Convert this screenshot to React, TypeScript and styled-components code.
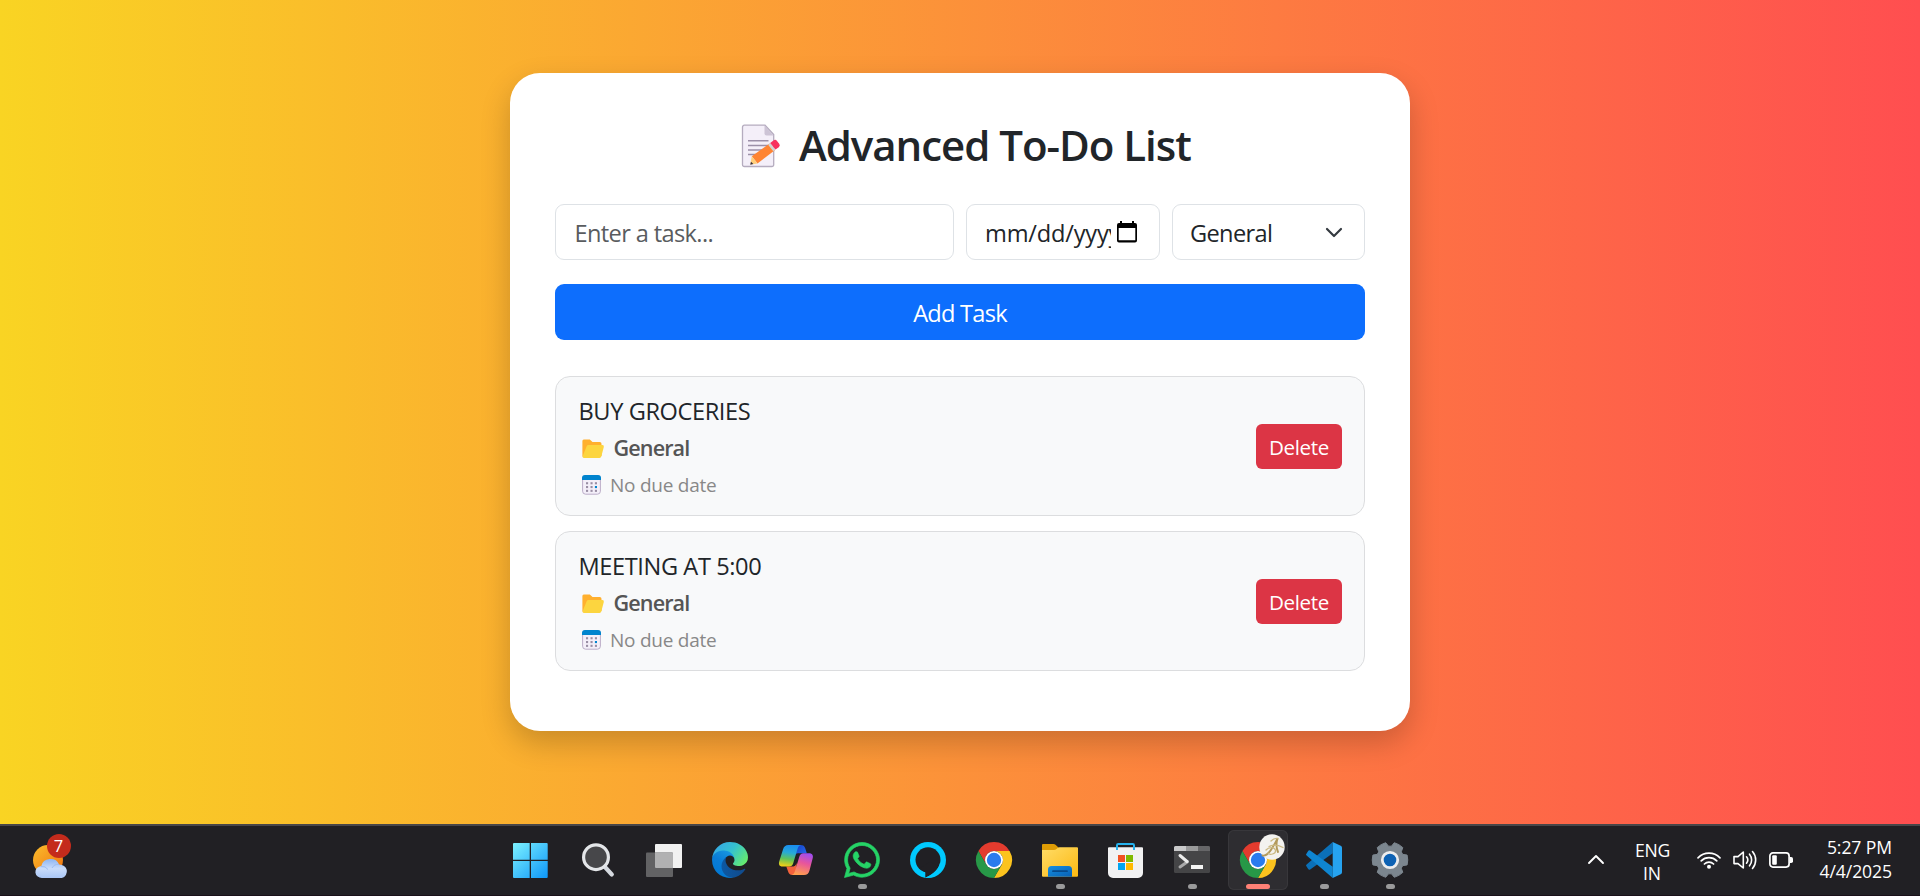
import React from 'react';
import styled, { createGlobalStyle } from 'styled-components';
import { FaWhatsapp } from 'react-icons/fa';

const GlobalStyle = createGlobalStyle`
  *, *::before, *::after { box-sizing: border-box; }
  html, body { margin: 0; padding: 0; }
  body {
    font-family: 'Open Sans', 'Noto Sans', sans-serif;
    color: #212529;
    overflow: hidden;
  }
  svg { display: block; overflow: visible; flex: none; }
`;

const Desktop = styled.div`
  display: flex;
  flex-direction: column;
  width: 1920px;
  height: 896px;
`;

const Page = styled.main`
  flex: 1;
  display: flex;
  justify-content: center;
  align-items: flex-start;
  padding-top: 73px;
  background: linear-gradient(to right, #f9d423, #ff4e50);
`;

const Card = styled.section`
  width: 900px;
  height: 658px;
  padding: 45px 45px 0;
  border-radius: 30px;
  background: #fff;
  box-shadow: 0 12px 30px rgba(0, 0, 0, 0.2);
`;

const Title = styled.h1`
  display: flex;
  align-items: center;
  gap: 14px;
  height: 54px;
  margin: 0 0 32px;
  padding-left: 184px;
  font-size: 42px;
  font-weight: 540;
  line-height: 54px;
  letter-spacing: -1.03px;
  white-space: nowrap;
`;

const Fields = styled.div`
  display: grid;
  grid-template-columns: 399px 194px 193px;
  gap: 12px;
  margin-bottom: 24px;
`;

const TaskInput = styled.input`
  height: 56px;
  padding: 2px 18px 0 18.5px;
  border: 1px solid #dee2e6;
  border-radius: 9px;
  background: #fff;
  font: 400 23.6px 'Open Sans', sans-serif;
  letter-spacing: -0.63px;
  outline: none;
  &::placeholder {
    color: #595c5f;
    opacity: 1;
  }
`;

const Control = styled.div`
  display: flex;
  align-items: center;
  justify-content: space-between;
  height: 56px;
  padding: 0 22px 0 17px;
  border: 1px solid #dee2e6;
  border-radius: 9px;
  font-size: 23.6px;
  line-height: 36px;
`;

const ControlText = styled.span<{ $width?: number; $spacing: number }>`
  width: ${(p) => (p.$width ? `${p.$width}px` : 'auto')};
  padding: 2px 0 0 ${(p) => (p.$width ? 1 : 0)}px;
  overflow: hidden;
  white-space: nowrap;
  letter-spacing: ${(p) => p.$spacing}px;
`;

const AddButton = styled.button`
  display: block;
  width: 100%;
  height: 56px;
  margin: 0 0 36px;
  padding: 2px 0 0;
  border: 0;
  border-radius: 9px;
  background: #0d6efd;
  color: #fff;
  font: 400 23.6px 'Open Sans', sans-serif;
  letter-spacing: -0.75px;
`;

const TaskList = styled.ul`
  display: flex;
  flex-direction: column;
  gap: 15px;
  margin: 0;
  padding: 0;
  list-style: none;
`;

const TaskItem = styled.li`
  display: flex;
  align-items: center;
  justify-content: space-between;
  height: 140px;
  padding: 0 22px;
  border: 1px solid #dcdddf;
  border-radius: 15px;
  background: #f8f9fa;
`;

const TaskInfo = styled.div`
  display: flex;
  flex-direction: column;
  margin-top: 4px;
`;

const TaskName = styled.span`
  height: 40px;
  padding-left: 0.5px;
  font-size: 23.6px;
  line-height: 40px;
  letter-spacing: -0.4px;
`;

const TaskMeta = styled.span<{ $kind: 'category' | 'date' }>`
  display: flex;
  align-items: center;
  gap: ${(p) => (p.$kind === 'category' ? 9.5 : 9)}px;
  height: ${(p) => (p.$kind === 'category' ? 33 : 41)}px;
  padding-left: 4px;
  color: ${(p) => (p.$kind === 'category' ? '#555' : '#888')};
  font-size: ${(p) => (p.$kind === 'category' ? 21.6 : 19)}px;
  font-weight: ${(p) => (p.$kind === 'category' ? 580 : 400)};
  letter-spacing: ${(p) => (p.$kind === 'category' ? -0.9 : -0.25)}px;
`;

const DeleteButton = styled.button`
  width: 86px;
  height: 45px;
  padding: 1px 0 0;
  border: 0;
  border-radius: 6px;
  background: #dc3545;
  color: #fff;
  font: 400 20.6px 'Open Sans', sans-serif;
  letter-spacing: -0.36px;
`;

const Taskbar = styled.footer`
  display: flex;
  height: 72px;
  border-top: 2px solid #484649;
  border-bottom: 1px solid #1a1019;
  background: #212024;
  color: #fff;
`;

const Widgets = styled.div`
  width: 499px;
  padding: 15px 0 0 33px;
`;

const Weather = styled.div`
  position: relative;
  width: 34px;
`;

const Badge = styled.span`
  position: absolute;
  left: 13.5px;
  top: -7px;
  width: 24px;
  height: 24px;
  border-radius: 50%;
  background: #c42b1c;
  font-size: 16.5px;
  font-weight: 500;
  line-height: 24px;
  text-align: center;
`;

const Apps = styled.nav`
  display: flex;
`;

const AppSlot = styled.div<{ $active?: boolean }>`
  display: flex;
  flex-direction: column;
  align-items: center;
  width: ${(p) => (p.$active ? 60 : 66)}px;
  height: 60px;
  margin: ${(p) => (p.$active ? '4px 3px 0' : '4px 0 0')};
  padding-top: 12px;
  border-radius: 6px;
  background: ${(p) => (p.$active ? '#2e2d31' : 'transparent')};
  box-shadow: ${(p) => (p.$active ? 'inset 0 0 0 1px #38373b' : 'none')};
`;

const IconFrame = styled.div`
  position: relative;
  display: flex;
  justify-content: center;
  align-items: center;
  width: 36px;
  height: 36px;
`;

const Indicator = styled.span<{ $active?: boolean }>`
  width: ${(p) => (p.$active ? 24 : 9)}px;
  height: 5px;
  margin-top: 6px;
  border-radius: 2.5px;
  background: ${(p) => (p.$active ? '#ff8176' : '#9a9a9b')};
`;

const ProfileBadge = styled.div`
  position: absolute;
  left: 19px;
  top: -8px;
`;

const Tray = styled.div`
  flex: 1;
  display: flex;
  justify-content: flex-end;
  padding-right: 28px;
  font-size: 17.6px;
`;

const TrayLabel = styled.div<{ $align: 'center' | 'right'; $width: number; $top: number; $spacing: number; $line: number }>`
  width: ${(p) => p.$width}px;
  padding-top: ${(p) => p.$top}px;
  text-align: ${(p) => p.$align};
  letter-spacing: ${(p) => p.$spacing}px;
  line-height: ${(p) => p.$line}px;
  white-space: nowrap;
`;

const TrayIcons = styled.div`
  display: flex;
  align-items: center;
  gap: 12px;
  height: 20px;
  margin: 24px 26px 0 28px;
`;

const TrayChevron = styled.div`
  margin: 29px 31px 0 0;
`;

const MemoIcon = () => (
  <svg width="46" height="46" viewBox="0 0 46 46">
    <path d="M6 3.700h20.500L35.200 13v30.200a1.800 1.800 0 0 1-1.800 1.800H5.800A1.800 1.800 0 0 1 4 43.200V5.500a1.800 1.800 0 0 1 2-1.800z" transform="translate(-.5 -.5)" fill="#f4eff9" stroke="#b5acbf" strokeWidth="1.300" />
    <path d="M25.500 3.600v8a2 2 0 0 0 2 2h7.200z" fill="#cdc4d6" />
    <path d="M9 18.700h20.500M9 23.500h20.500M9 28h17M9 32.400h10" stroke="#9b8fa8" strokeWidth="1.500" />
    <path d="M30.600 21.600l5.200 6.600L18.500 41.500l-5.700-7.300z" fill="#ff8433" />
    <path d="M12.800 34.200l5.700 7.300-6.200.9-.9-.8z" fill="#ffcf7c" />
    <path d="M12 39.700l2.400 2.200-3.200.8z" fill="#37303f" />
    <path d="M29.100 22.700l2.200-1.700 5.200 6.600-2.200 1.700z" fill="#d3d3d3" />
    <path d="M31.200 21l3.300-2.500a2.500 2.500 0 0 1 3.500.5l2.200 2.800a2.500 2.500 0 0 1-.4 3.400l-3.300 2.400z" fill="#f8315f" />
  </svg>
);

const DateIcon = () => (
  <svg width="20" height="22" viewBox="0 0 20 22">
    <path fillRule="evenodd" d="M3 0h2v2h10V0h2v2h1a2 2 0 0 1 2 2v15.500a2 2 0 0 1-2 2H2a2 2 0 0 1-2-2V4a2 2 0 0 1 2-2h1zM1.700 7v12.300h16.600V7z" fill="#000" />
  </svg>
);

const SelectChevron = () => (
  <svg width="16" height="9" viewBox="0 0 16 9">
    <path d="M1 1l7 7 7-7" fill="none" stroke="#343a40" strokeWidth="2.200" strokeLinecap="round" strokeLinejoin="round" />
  </svg>
);

const FolderIcon = () => (
  <svg width="22" height="18" viewBox="0 0 22 18">
    <path d="M1.800.500h6l2.700 2.400h7.200a1.800 1.800 0 0 1 1.800 1.800V17l-17 1.500A1.800 1.800 0 0 1 .400 17V2A1.500 1.500 0 0 1 1.800.500z" fill="#ffb02e" />
    <path d="M6.500 6H20.200a1.600 1.600 0 0 1 1.600 2l-2.500 9.600a1.800 1.800 0 0 1-1.800 1.300H2a1.400 1.400 0 0 1-1.300-1.800L4.700 7.300A1.900 1.900 0 0 1 6.500 6z" fill="#fcd53f" />
  </svg>
);

const CalendarIcon = () => (
  <svg width="19" height="20" viewBox="0 0 19 20">
    <rect x=".6" y=".6" width="17.800" height="18.600" rx="3" fill="#f4eff9" stroke="#bbaec8" />
    <path d="M0 5V3a3 3 0 0 1 3-3h13a3 3 0 0 1 3 3v2z" fill="#0084ce" />
    {[7.2, 11, 14.8].map((y) =>
      [4, 8.5, 12.9].map((x) => (
        <rect key={`${x}-${y}`} x={x} y={y} width="2.100" height="2.100" fill={x > 12 && y === 11 ? '#0084ce' : '#998ea4'} />
      )),
    )}
  </svg>
);

const WeatherIcon = () => (
  <svg width="34" height="38" viewBox="0 0 34 38">
    <defs>
      <linearGradient id="sun" x1="0" y1="0" x2="1" y2="1">
        <stop offset="0" stopColor="#fbbd2c" />
        <stop offset="1" stopColor="#f0700f" />
      </linearGradient>
      <linearGradient id="cloud" x1="0" y1="0" x2="0" y2="1">
        <stop offset="0" stopColor="#8db5f2" />
        <stop offset=".5" stopColor="#c9dcfa" />
        <stop offset="1" stopColor="#a9c6f6" />
      </linearGradient>
    </defs>
    <circle cx="15" cy="19" r="15" fill="url(#sun)" />
    <path d="M9 37a6 6 0 0 1-1-12 8.600 8.600 0 0 1 16.400-1.600A7 7 0 0 1 27 37z" transform="matrix(1.08 0 0 1 -.3 0)" fill="url(#cloud)" />
    <path d="M8 25.500a7 7 0 0 1 7 3M19 27a7 7 0 0 1 7-3.600" fill="none" stroke="#9dbcf0" strokeWidth="1" />
  </svg>
);

const WindowsIcon = () => (
  <svg width="36" height="36" viewBox="0 0 36 36">
    <defs>
      <linearGradient id="win" gradientUnits="userSpaceOnUse" x1="-1" y1="1" x2="34" y2="36">
        <stop offset="0" stopColor="#7df2ff" />
        <stop offset="1" stopColor="#0d96f8" />
      </linearGradient>
    </defs>
    <path d="M0 1h15.700v16.700H-1V2a1 1 0 0 1 1-1zM17 1h15.700a1 1 0 0 1 1 1v15.700H17zM-1 19h16.700v17H0a1 1 0 0 1-1-1zM17 19h16.700v16a1 1 0 0 1-1 1H17z" fill="url(#win)" />
  </svg>
);

const SearchIcon = () => (
  <svg width="36" height="36" viewBox="0 0 36 36">
    <path d="M24.500 24.500l7.300 8" stroke="#d5d9df" strokeWidth="4.200" strokeLinecap="round" />
    <circle cx="16" cy="15.200" r="12.400" fill="#47474a" stroke="#e4e6e9" strokeWidth="3.200" />
  </svg>
);

const TaskViewIcon = () => (
  <svg width="36" height="36" viewBox="0 0 36 36">
    <rect x="9" y="2" width="27" height="24" rx="1" fill="#f1f1f1" />
    <rect x="0" y="10.500" width="27" height="24.500" rx="1" fill="#626264" />
    <path d="M9 10.500h17a1 1 0 0 1 1 1V26H10a1 1 0 0 1-1-1z" fill="#b1b1b2" />
  </svg>
);

const EdgeIcon = () => (
  <svg width="36" height="36" viewBox="0 0 256 256">
    <defs>
      <linearGradient id="edgeA" x1="0" y1="0" x2="1" y2="0">
        <stop offset="0" stopColor="#0c59a4" />
        <stop offset="1" stopColor="#114a8b" />
      </linearGradient>
      <linearGradient id="edgeB" x1=".8" y1="0" x2=".3" y2="1">
        <stop offset="0" stopColor="#1b9de2" />
        <stop offset=".5" stopColor="#0a7cd6" />
        <stop offset="1" stopColor="#0078d4" />
      </linearGradient>
      <linearGradient id="edgeC" x1="0" y1=".2" x2="1" y2=".7">
        <stop offset="0" stopColor="#35a6e8" />
        <stop offset=".5" stopColor="#35c1cf" />
        <stop offset="1" stopColor="#66eb6e" />
      </linearGradient>
    </defs>
    <path fill="url(#edgeA)" d="M231 190.500c-3.400 1.800-6.900 3.400-10.500 4.700a101.900 101.900 0 0 1-35.900 6.500c-47.300 0-88.500-32.500-88.500-74.300a31.500 31.500 0 0 1 16.400-27.300c-42.800 1.800-53.800 46.400-53.800 72.500 0 74 68.100 81.400 82.800 81.400 7.900 0 19.800-2.300 27-4.600l1.300-.4a128.300 128.300 0 0 0 66.600-52.800 4 4 0 0 0-5.400-5.700z" />
    <path fill="url(#edgeB)" d="M105.700 241.400A79.200 79.200 0 0 1 83 220.100a80.700 80.700 0 0 1 29.500-120c3.200-1.500 8.500-4.100 15.600-4a32.400 32.400 0 0 1 25.700 13 31.900 31.900 0 0 1 6.300 18.700c0-.2 24.500-79.600-80-79.600-43.900 0-80 41.600-80 78.200a130.200 130.200 0 0 0 12.100 56 128 128 0 0 0 156.400 67 75.500 75.500 0 0 1-62.800-8z" />
    <path fill="url(#edgeC)" d="M152.300 148.900c-.9 1-3.400 2.500-3.400 5.600 0 2.600 1.700 5.200 4.800 7.300 14.300 10 41.400 8.600 41.500 8.600a59.600 59.600 0 0 0 30.300-8.300 61.400 61.400 0 0 0 30.400-52.900c.3-22.400-8-37.300-11.300-43.900C223.500 23.900 177.700 0 128 0A128 128 0 0 0 0 126.200c.5-36.500 36.800-66 80-66 3.500 0 23.500.3 42 10 16.300 8.600 24.900 18.900 30.800 29.200 6.200 10.700 7.300 24.100 7.300 29.500 0 5.300-2.700 13.300-7.800 20z" />
  </svg>
);

const CopilotIcon = () => (
  <svg width="36" height="36" viewBox="0 0 36 36">
    <defs>
      <linearGradient id="copA" x1=".5" y1="0" x2=".35" y2="1">
        <stop offset="0" stopColor="#1a8df0" />
        <stop offset=".35" stopColor="#27a9d8" />
        <stop offset=".65" stopColor="#5fc35a" />
        <stop offset="1" stopColor="#f5cf14" />
      </linearGradient>
      <linearGradient id="copB" x1=".7" y1="0" x2=".4" y2="1">
        <stop offset="0" stopColor="#a04df0" />
        <stop offset=".45" stopColor="#e8559b" />
        <stop offset="1" stopColor="#ff9f4e" />
      </linearGradient>
      <linearGradient id="copC" x1="0" y1="0" x2="1" y2="1">
        <stop offset="0" stopColor="#123fc4" />
        <stop offset="1" stopColor="#2a6df0" />
      </linearGradient>
    </defs>
    <path d="M17 3h5.500c3 0 4 1 4.800 3.500l1.500 4.700H20c-2 0-3 1-3.500 2.800z" fill="url(#copC)" />
    <path d="M19 33h-4.500c-2.700 0-3.700-1.300-4.400-3.500L8.300 24.500h6c2.500 0 3.500-1 4.200-3.500z" fill="#f4623c" />
    <path d="M10.500 3H23c-1.800.300-2.800 1.700-3.500 4l-4.300 14.300c-.7 2.200-1.900 3.300-4.200 3.300H4.500c-3.300 0-4-2.300-3.300-5L5 7.500C5.800 4.500 7.500 3 10.500 3z" fill="url(#copA)" />
    <path d="M26 33H13.500c1.800-.3 2.800-1.700 3.500-4l4.300-14.300c.7-2.200 1.900-3.400 4.200-3.400H31c3.300 0 4.500 2.300 3.700 5L31.500 28.500C30.700 31.500 29 33 26 33z" fill="url(#copB)" />
    <path d="M20.600 11.500l-2.600 8.800c-.5 1.800-1 3.200-2.600 4.200l2.400-8.600c.5-2 1-3.600 2.800-4.400z" fill="#212024" />
  </svg>
);

const AlexaIcon = () => (
  <svg width="36" height="36" viewBox="0 0 36 36">
    <circle cx="18" cy="18" r="18" fill="#00caff" />
    <circle cx="18" cy="17.800" r="12.500" fill="#212024" />
    <path d="M9 26.500l6.300 3.800V35.500C20.500 34 26.500 29.500 29 23.500L20 20z" fill="#212024" />
    <path d="M15.500 36C20 33 28 30 30 21l3 3c-2 7-8 12-17.500 12z" fill="#00caff" />
  </svg>
);

const ChromeIcon = () => (
  <svg width="36" height="36" viewBox="0 0 36 36">
    <path d="M18 9H33.590A18 18 0 0 0 2.410 9L10.210 22.500A9 9 0 0 1 18 9z" fill="#e33b2e" />
    <path d="M18 9H33.590A18 18 0 0 1 18 36L25.790 22.500A9 9 0 0 0 18 9z" fill="#fcc31e" />
    <path d="M2.410 9A18 18 0 0 0 18 36L25.790 22.500A9 9 0 0 1 10.210 22.500z" fill="#279847" />
    <circle cx="18" cy="18" r="9" fill="#fff" />
    <circle cx="18" cy="18" r="7.200" fill="#2a7bee" />
  </svg>
);

const ExplorerIcon = () => (
  <svg width="36" height="36" viewBox="0 0 36 36">
    <defs>
      <linearGradient id="fold" x1="0" y1="0" x2="1" y2="1">
        <stop offset="0" stopColor="#ffdc67" />
        <stop offset="1" stopColor="#fcb912" />
      </linearGradient>
      <linearGradient id="foldBlue" x1="0" y1="0" x2="1" y2="1">
        <stop offset="0" stopColor="#1690e0" />
        <stop offset="1" stopColor="#075fb5" />
      </linearGradient>
    </defs>
    <path d="M1 2h10.500a3 3 0 0 1 2 .8L17 6v6H0V3a1 1 0 0 1 1-1z" fill="#de9c05" />
    <path d="M0 8h12a4 4 0 0 0 2.500-1l1.500-1.300a3 3 0 0 1 1.500-.4H35a1 1 0 0 1 1 1v27.500a1 1 0 0 1-1 1H1a1 1 0 0 1-1-1z" fill="url(#fold)" />
    <path d="M6 34.800V27.500a3.500 3.500 0 0 1 3.500-3.500h17a3.500 3.500 0 0 1 3.500 3.500v7.300z" fill="url(#foldBlue)" />
    <path d="M11 29.200h14" stroke="#064a8c" strokeWidth="1.800" strokeLinecap="round" />
  </svg>
);

const StoreIcon = () => (
  <svg width="36" height="36" viewBox="0 0 36 36">
    <path d="M1 5.300h33a1 1 0 0 1 1 1V31a5 5 0 0 1-5 5H5a5 5 0 0 1-5-5V6.300a1 1 0 0 1 1-1z" fill="#f1f1f2" />
    <path d="M9 8V3.200A1.200 1.200 0 0 1 10.200 2h14.600A1.200 1.200 0 0 1 26 3.200V8" fill="none" stroke="#25b2ee" strokeWidth="2" />
    <path d="M10 13h7v7h-7z" fill="#f25022" />
    <path d="M18 13h7v7h-7z" fill="#7fba00" />
    <path d="M10 21h7v7h-7z" fill="#00a4ef" />
    <path d="M18 21h7v7h-7z" fill="#ffb900" />
  </svg>
);

const TerminalIcon = () => (
  <svg width="36" height="36" viewBox="0 0 36 36">
    <rect y="4" width="36" height="27" rx="1.500" fill="#454547" />
    <path d="M0 9V5.500A1.500 1.500 0 0 1 1.500 4H12v5z" fill="#c9c9ca" />
    <path d="M12 4h12v5H12z" fill="#99999a" />
    <path d="M24 4h10.500A1.500 1.500 0 0 1 36 5.500V9H24z" fill="#666668" />
    <path d="M6 25l7.500-5.300" stroke="#a9a9aa" strokeWidth="3" strokeLinecap="round" />
    <path d="M6 13.500l7 6" stroke="#ececec" strokeWidth="3" strokeLinecap="round" />
    <path d="M17 23h12v4H17z" fill="#f4f4f4" />
  </svg>
);

const VsCodeIcon = () => (
  <svg width="36" height="36" viewBox="0 0 36 36">
    <path d="M.6 24.500a1.300 1.300 0 0 1 0-2L26.700 0V11.300L4.200 27.400a1.500 1.500 0 0 1-1.900-.1z" fill="#0b70b8" />
    <path d="M.6 11.500a1.300 1.300 0 0 0 0 2L26.700 36V24.700L4.200 8.600a1.500 1.500 0 0 0-1.900.1z" fill="#0f86d2" />
    <path d="M26.700 0l8 3.700A2.300 2.300 0 0 1 36 5.800v24.400a2.300 2.300 0 0 1-1.300 2.100L26.700 36z" fill="#26a3f0" />
  </svg>
);

const gearPath = Array.from({ length: 6 }, (_, i) => {
  const at = (radius: number, deg: number) => {
    const a = ((i * 60 + deg) * Math.PI) / 180;
    return `${(18 + radius * Math.cos(a)).toFixed(2)} ${(18 + radius * Math.sin(a)).toFixed(2)}`;
  };
  return `${i ? 'L' : 'M'}${at(13.9, -24)}L${at(17.8, -16)}Q${at(18.4, 0)} ${at(17.8, 16)}L${at(13.9, 24)}`;
}).join('') + 'Z';

const SettingsIcon = () => (
  <svg width="36" height="36" viewBox="0 0 36 36">
    <path d={gearPath} fill="#7c868f" stroke="#7c868f" strokeWidth="1" strokeLinejoin="round" />
    <circle cx="18" cy="18" r="7.700" fill="#0e62b4" stroke="#ededee" strokeWidth="2.800" />
  </svg>
);

const ProfileIcon = () => (
  <svg width="26" height="26" viewBox="0 0 26 26">
    <circle cx="13" cy="13" r="12.700" fill="#f3f2ef" />
    <path d="M3.500 21.500C9 23 14 13 18.500 4.500c-1.500 5-1.500 9 .5 13.500" fill="none" stroke="#b39a5c" strokeWidth="1.900" strokeLinecap="round" />
    <path d="M7 16c3-3.500 9-3 9.500.500s-6 5-7.500 2.500M10 12.500c4-2 9-1.500 14 1M12 7c2-2 5-3 7-2.500" fill="none" stroke="#cbb983" strokeWidth="1.300" strokeLinecap="round" />
  </svg>
);

const WifiIcon = () => (
  <svg width="24" height="18" viewBox="0 0 24 18" fill="none" stroke="#fff" strokeWidth="1.700" strokeLinecap="round">
    <path d="M1 6.800a15.500 15.500 0 0 1 22 0M4.200 9.900a11 11 0 0 1 15.600 0M7.400 13a6.500 6.500 0 0 1 9.200 0" />
    <circle cx="12" cy="15.800" r="2" fill="#fff" stroke="none" />
  </svg>
);

const SpeakerIcon = () => (
  <svg width="24" height="20" viewBox="0 0 24 20" fill="none" stroke="#fff" strokeWidth="1.600" strokeLinecap="round" strokeLinejoin="round">
    <path d="M1 6.600h4L10.300 2v16L5 13.600H1zM13.500 6.800a5 5 0 0 1 0 6.400M16.500 4.200a9 9 0 0 1 0 11.600M19.500 1.500a13 13 0 0 1 0 17" />
  </svg>
);

const BatteryIcon = () => (
  <svg width="24" height="16" viewBox="0 0 24 16">
    <rect x=".9" y=".9" width="19.200" height="14.200" rx="3" fill="none" stroke="#fff" strokeWidth="1.700" />
    <rect x="3.200" y="3.300" width="4.600" height="9.400" rx="1" fill="#fff" />
    <path d="M21 5h1.200A1.800 1.800 0 0 1 24 6.800v2.400a1.800 1.800 0 0 1-1.800 1.800H21z" fill="#fff" />
  </svg>
);

const tasks = ['BUY GROCERIES', 'MEETING AT 5:00'];

type TaskbarApp = { name: string; icon: React.ReactNode; open?: boolean; active?: boolean };

const apps: TaskbarApp[] = [
  { name: 'start', icon: <WindowsIcon /> },
  { name: 'search', icon: <SearchIcon /> },
  { name: 'task-view', icon: <TaskViewIcon /> },
  { name: 'edge', icon: <EdgeIcon /> },
  { name: 'copilot', icon: <CopilotIcon /> },
  { name: 'whatsapp', icon: <FaWhatsapp size={40} color="#25d366" strokeWidth={9} />, open: true },
  { name: 'alexa', icon: <AlexaIcon /> },
  { name: 'chrome', icon: <ChromeIcon /> },
  { name: 'explorer', icon: <ExplorerIcon />, open: true },
  { name: 'store', icon: <StoreIcon /> },
  { name: 'terminal', icon: <TerminalIcon />, open: true },
  { name: 'chrome-profile', icon: <ChromeIcon />, open: true, active: true },
  { name: 'vscode', icon: <VsCodeIcon />, open: true },
  { name: 'settings', icon: <SettingsIcon />, open: true },
];

export default function App() {
  return (
    <Desktop>
      <GlobalStyle />
      <Page>
        <Card>
          <Title>
            <MemoIcon />
            Advanced To-Do List
          </Title>
          <Fields>
            <TaskInput placeholder="Enter a task..." />
            <Control>
              <ControlText $width={127} $spacing={-0.2}>mm/dd/yyyy</ControlText>
              <DateIcon />
            </Control>
            <Control>
              <ControlText $spacing={-0.65}>General</ControlText>
              <SelectChevron />
            </Control>
          </Fields>
          <AddButton>Add Task</AddButton>
          <TaskList>
            {tasks.map((name) => (
              <TaskItem key={name}>
                <TaskInfo>
                  <TaskName>{name}</TaskName>
                  <TaskMeta $kind="category">
                    <FolderIcon />
                    General
                  </TaskMeta>
                  <TaskMeta $kind="date">
                    <CalendarIcon />
                    No due date
                  </TaskMeta>
                </TaskInfo>
                <DeleteButton>Delete</DeleteButton>
              </TaskItem>
            ))}
          </TaskList>
        </Card>
      </Page>
      <Taskbar>
        <Widgets>
          <Weather>
            <WeatherIcon />
            <Badge>7</Badge>
          </Weather>
        </Widgets>
        <Apps>
          {apps.map((app) => (
            <AppSlot key={app.name} $active={app.active}>
              <IconFrame>
                {app.icon}
                {app.active && (
                  <ProfileBadge>
                    <ProfileIcon />
                  </ProfileBadge>
                )}
              </IconFrame>
              {app.open && <Indicator $active={app.active} />}
            </AppSlot>
          ))}
        </Apps>
        <Tray>
          <TrayChevron>
            <svg width="16" height="9" viewBox="0 0 16 9">
              <path d="M1 8l7-7 7 7" fill="none" stroke="#fff" strokeWidth="1.900" strokeLinecap="round" strokeLinejoin="round" />
            </svg>
          </TrayChevron>
          <TrayLabel $align="center" $width={34} $top={12.5} $spacing={-0.2} $line={23}>
            ENG
            <br />
            IN
          </TrayLabel>
          <TrayIcons>
            <WifiIcon />
            <SpeakerIcon />
            <BatteryIcon />
          </TrayIcons>
          <TrayLabel $align="right" $width={73} $top={10} $spacing={-0.1} $line={23.5}>
            5:27 PM
            <br />
            4/4/2025
          </TrayLabel>
        </Tray>
      </Taskbar>
    </Desktop>
  );
}
